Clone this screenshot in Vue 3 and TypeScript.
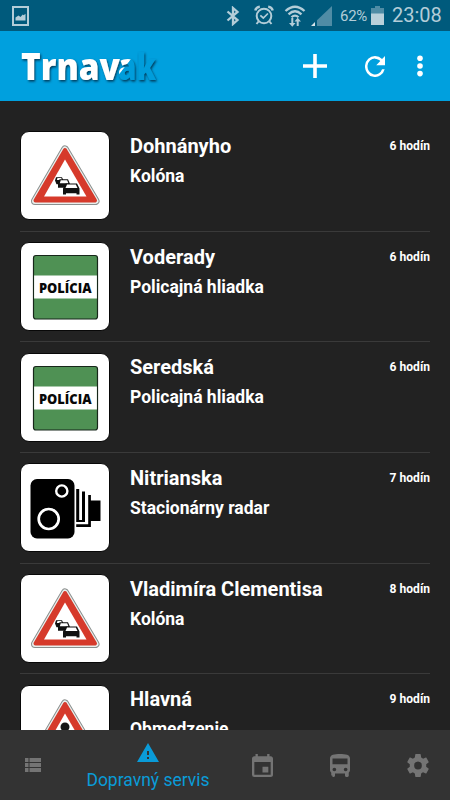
<script setup lang="ts">
type Sign = 'queue' | 'police' | 'radar' | 'works'

interface Report {
  place: string
  kind: string
  age: string
  sign: Sign
}

const reports: Report[] = [
  { place: 'Dohnányho', kind: 'Kolóna', age: '6 hodín', sign: 'queue' },
  { place: 'Voderady', kind: 'Policajná hliadka', age: '6 hodín', sign: 'police' },
  { place: 'Seredská', kind: 'Policajná hliadka', age: '6 hodín', sign: 'police' },
  { place: 'Nitrianska', kind: 'Stacionárny radar', age: '7 hodín', sign: 'radar' },
  { place: 'Vladimíra Clementisa', kind: 'Kolóna', age: '8 hodín', sign: 'queue' },
  { place: 'Hlavná', kind: 'Obmedzenie', age: '9 hodín', sign: 'works' },
]
</script>

<template>
  <div class="screen">
    <div class="status">
      <svg class="shot" width="17" height="20" viewBox="0 0 17 20">
        <path d="M1 1h15v18H1z" fill="none" stroke="#b3cdd8" stroke-width="2" />
        <path d="M3.5 14.5v-3l3-2 2 1.5 2.2-2.5 1 .8 1.8-1.600v6.800z" fill="#b3cdd8" />
      </svg>
      <div class="spacer"></div>
      <svg class="bt" width="14" height="20" viewBox="0 0 14 20">
        <path d="M1.500 5.500l10 8.600L7 18V2l4.500 3.900-10 8.600" fill="none" stroke="#b3cdd8" stroke-width="2.300" />
      </svg>
      <svg class="alarm" width="20" height="21" viewBox="0 0 20 21">
        <g fill="none" stroke="#b3cdd8">
          <circle cx="10" cy="11" r="7.300" stroke-width="2" />
          <path d="M1.300 5.600Q2 2 5.800 1.700M18.700 5.600Q18 2 14.200 1.700" stroke-width="2.400" />
          <path d="M6.300 10.300l3 2.700 4.600-4.500" stroke-width="1.700" />
          <path d="M4.500 16.500L2.500 19M15.500 16.500l2 2.500" stroke-width="2" />
        </g>
      </svg>
      <svg class="wifi" width="22" height="22" viewBox="0 0 22 22">
        <g fill="none" stroke="#b3cdd8" stroke-width="2.300">
          <path d="M1.500 6Q11-2.500 20.500 6" />
          <path d="M4.500 9.300Q11 3.200 17.500 9.300" />
          <path d="M7.500 12.300Q11 8.900 14.500 12.300" />
        </g>
        <path d="M7.300 13h2v5h2.200l-3.200 3.700L5 18h2.300zM12.700 21h2v-4.500H17l-3.300-3.700-3.200 3.700h2.200z" fill="#b3cdd8" />
      </svg>
      <svg class="signal" width="21" height="20" viewBox="0 0 21 20">
        <path d="M21 0v20H6v-5.700z" fill="#4f8ca5" />
        <path d="M4 16v4H0z" fill="#d6e5eb" />
      </svg>
      <span class="percent">62%</span>
      <svg class="battery" width="13" height="19" viewBox="0 0 13 19">
        <path d="M4 0h5v2h4v17H0V2h4z" fill="#4f8ca5" />
        <path d="M0 7.500h13V19H0z" fill="#b9d0da" />
      </svg>
      <span class="clock">23:08</span>
    </div>

    <header class="bar">
      <svg class="logo" width="150" height="60" viewBox="0 0 150 60">
        <defs>
          <linearGradient id="brand" gradientUnits="userSpaceOnUse" x1="113.200" y1="29.700" x2="113.900" y2="30.250">
            <stop offset="0" stop-color="#fff" />
            <stop offset="1" stop-color="#039ddb" />
          </linearGradient>
          <filter id="drop" filterUnits="userSpaceOnUse" x="0" y="0" width="150" height="60">
            <feDropShadow dx="1" dy="1.500" stdDeviation=".8" flood-color="#002f49" flood-opacity=".9" />
          </filter>
        </defs>
        <g fill="url(#brand)" filter="url(#drop)">
          <text x="9" y="43.500" textLength="99" lengthAdjust="spacingAndGlyphs">Trnav</text>
          <text x="106" y="43.500" textLength="38" lengthAdjust="spacingAndGlyphs">ak</text>
        </g>
      </svg>
      <div class="spacer"></div>
      <svg class="plus" width="24" height="24" viewBox="0 0 24 24">
        <path d="M12 0v24M0 12h24" stroke="#fff" stroke-width="3.600" />
      </svg>
      <svg class="reload" width="20" height="21" viewBox="4 4 16 16" preserveAspectRatio="none">
        <path d="M17.650 6.350A7.960 7.960 0 0 0 12 4a8 8 0 1 0 7.730 10h-2.080A6 6 0 1 1 12 6c1.660 0 3.140.69 4.220 1.780L13 11h7V4z" fill="#fff" />
      </svg>
      <svg class="more" width="6" height="22" viewBox="0 0 6 22">
        <g fill="#fff">
          <circle cx="3" cy="3.200" r="2.800" />
          <circle cx="3" cy="11" r="2.800" />
          <circle cx="3" cy="18.600" r="2.800" />
        </g>
      </svg>
    </header>

    <main class="list">
      <article v-for="r in reports" :key="r.place" class="row">
        <div class="tile">
          <svg v-if="r.sign === 'queue' || r.sign === 'works'" width="88" height="88" viewBox="-0.500 0 88 88">
            <path d="M43.500 17.500L74 69H13.500z" fill="#8b8f8e" stroke="#8b8f8e" stroke-width="8" stroke-linejoin="round" />
            <path d="M43.500 17.500L74 69H13.500z" fill="#e9efed" stroke="#e9efed" stroke-width="6" stroke-linejoin="round" />
            <path d="M43.500 18L73.500 68.500H14z" fill="#d63a2b" stroke="#d63a2b" stroke-width="4" stroke-linejoin="round" />
            <path d="M43.500 27.500L65 64.500H22.500z" fill="#fff" />
            <g v-if="r.sign === 'queue'">
              <path d="M33.500 48.500l1-3.300h6l1.500 3.300 1 1v2.800h-8z" fill="#111" />
              <path d="M35.300 48l.7-2h3.700l1 2z" fill="#fff" />
              <path d="M36.500 52l1.500-4.700h8.500l2 4.700v3.800h-12z" fill="#111" />
              <path d="M38.300 51.300l.9-3h6.500l1.200 3z" fill="#fff" />
              <path d="M41.500 56.500l2.800-5h11.200l2.500 5v6h-3v-1.300H44.500v1.300h-3z" fill="#111" />
              <path d="M44 56l1.500-3.500h8.800L56 56z" fill="#fff" />
            </g>
            <g v-else fill="#151515">
              <circle cx="43.500" cy="41" r="4.500" />
              <path d="M40 44h7l2 16H38z" />
            </g>
          </svg>
          <svg v-else-if="r.sign === 'police'" width="88" height="88" viewBox="0 0 88 88">
            <rect x="12.500" y="12.500" width="64" height="63.500" rx="2.500" fill="#4f9154" stroke="#17271a" stroke-width="1.200" />
            <path d="M13.100 32.500h62.800v23H13.100z" fill="#fff" />
            <text class="police" x="18" y="49.500" textLength="52.500" lengthAdjust="spacingAndGlyphs">POLÍCIA</text>
          </svg>
          <svg v-else width="88" height="88" viewBox="0 0 88 88">
            <rect x="9.500" y="15" width="44" height="59.500" rx="6.500" fill="#000" />
            <circle cx="40.800" cy="27" r="5.600" fill="none" stroke="#fff" stroke-width="2.400" />
            <circle cx="27.700" cy="55" r="10" fill="none" stroke="#fff" stroke-width="2.700" />
            <path d="M55.200 25h3v31h-3zM61 27.500h3V58h-3zM67.200 31h2.700v32H55.200v-2.700h12zM55.200 56h7.500v2h-7.500zM69.500 36.500h10v20.500h-10z" fill="#000" />
          </svg>
        </div>
        <div class="info">
          <h2>{{ r.place }}</h2>
          <p>{{ r.kind }}</p>
        </div>
        <span class="age">{{ r.age }}</span>
      </article>
    </main>

    <nav class="tabs">
      <div class="tab list-tab">
        <svg width="16" height="14" viewBox="0 0 16 14">
          <path d="M0 0h3.500v4H0zM4.500 0H16v4H4.500zM0 5h3.500v4H0zM4.500 5H16v4H4.500zM0 10h3.500v4H0zM4.500 10H16v4H4.500z" fill="#747474" />
        </svg>
      </div>
      <div class="tab active">
        <svg width="22" height="19" viewBox="1 2 22 19">
          <path d="M1 21h22L12 2zM13 18h-2v-2h2zm0-4h-2v-4h2z" fill="#0a9bd8" />
        </svg>
        <span>Dopravný servis</span>
      </div>
      <div class="tab event-tab">
        <svg width="21" height="23" viewBox="3 1 18 20" preserveAspectRatio="none">
          <path d="M17 12h-5v5h5zM16 1v2H8V1H6v2H5c-1.110 0-1.990.9-1.990 2L3 19a2 2 0 0 0 2 2h14c1.100 0 2-.9 2-2V5c0-1.100-.9-2-2-2h-1V1zm3 18H5V8h14z" fill="#747474" />
        </svg>
      </div>
      <div class="tab bus-tab">
        <svg width="20" height="23" viewBox="4 2 16 20" preserveAspectRatio="none">
          <path d="M4 16c0 .88.390 1.670 1 2.220V20c0 .55.450 1 1 1v1h1c.55 0 1-.45 1-1v-2h8v2c0 .55.450 1 1 1h1c.55 0 1-.45 1-1v-2.780c.61-.55 1-1.340 1-2.220V6c0-3.500-3.580-4-8-4s-8 .5-8 4zm3.500 1a1.500 1.500 0 1 1 0-3 1.500 1.500 0 0 1 0 3zm9 0a1.500 1.500 0 1 1 0-3 1.500 1.500 0 0 1 0 3zM18 11H6V6h12z" fill="#747474" />
        </svg>
      </div>
      <div class="tab gear-tab">
        <svg width="22" height="23" viewBox="2 2 20 20" preserveAspectRatio="none">
          <path d="M19.430 12.980c.04-.32.070-.64.070-.98s-.03-.66-.07-.98l2.110-1.650c.19-.15.240-.42.120-.64l-2-3.460c-.12-.22-.39-.3-.61-.22l-2.490 1c-.52-.4-1.080-.73-1.690-.98l-.38-2.650A.49.490 0 0 0 14 2h-4c-.25 0-.46.180-.49.420l-.38 2.650c-.61.250-1.170.590-1.690.98l-2.490-1c-.23-.09-.49 0-.61.220l-2 3.460c-.13.220-.07.490.12.640l2.110 1.650c-.04.320-.07.650-.07.980s.03.660.07.980l-2.110 1.650c-.19.150-.24.420-.12.640l2 3.460c.12.220.39.300.61.220l2.490-1c.52.400 1.080.730 1.690.98l.38 2.650c.03.240.24.420.49.420h4c.25 0 .46-.18.490-.42l.38-2.650c.61-.25 1.170-.59 1.690-.98l2.490 1c.23.090.49 0 .61-.22l2-3.460c.12-.22.070-.49-.12-.64zM12 15.500a3.500 3.500 0 1 1 0-7 3.500 3.500 0 0 1 0 7z" fill="#747474" />
        </svg>
      </div>
    </nav>
  </div>
</template>

<style>
body {
  margin: 0;
  background: #222;
}
</style>

<style scoped>
.screen {
  display: flex;
  flex-direction: column;
  width: 450px;
  height: 800px;
  overflow: hidden;
  background: #222;
  color: #fff;
  font-family: Roboto, sans-serif;
}
.spacer {
  flex: 1;
}
.status {
  display: flex;
  align-items: center;
  flex: none;
  box-sizing: border-box;
  height: 31px;
  padding: 0 8px 0 12px;
  background: #005a7c;
  color: #b3cdd8;
}
.bt { margin-right: 14px; }
.alarm { margin-right: 10px; }
.wifi { margin-right: 5px; }
.signal { margin-right: 8px; }
.percent {
  width: 31px;
  font-size: 15px;
  letter-spacing: -0.3px;
}
.battery { margin-right: 8px; }
.clock {
  width: 50px;
  font-size: 20px;
  line-height: 31px;
  white-space: nowrap;
}
.bar {
  display: flex;
  align-items: center;
  flex: none;
  box-sizing: border-box;
  height: 70px;
  padding: 0 27px 0 12px;
  background: #00a0de;
}
.logo text {
  font: 800 37.500px "Open Sans", "Noto Sans", sans-serif;
}
.plus { margin-right: 38px; }
.reload { margin-right: 32px; }
.list {
  flex: 1;
  min-height: 0;
  overflow: hidden;
  padding: 20px 20px 0;
}
.row {
  display: flex;
  box-sizing: border-box;
  height: 110.700px;
  padding-top: 10.400px;
  border-bottom: 1px solid #3a3a3a;
}
.tile {
  flex: none;
  box-sizing: border-box;
  width: 90px;
  height: 89px;
  overflow: hidden;
  border: 1px solid #080808;
  border-radius: 9px;
  background: #fff;
}
.tile svg {
  display: block;
}
.police {
  font: 800 14.500px "Open Sans", "Noto Sans", sans-serif;
  fill: #080808;
}
.info {
  flex: 1;
  padding-left: 20px;
}
h2 {
  margin: 2.500px 0 0;
  font-size: 20px;
  font-weight: 700;
  line-height: 24px;
}
p {
  margin: 7px 0 0;
  font-size: 17.500px;
  font-weight: 700;
  line-height: 22px;
}
.age {
  margin-top: 6.500px;
  font-size: 12.100px;
  font-weight: 700;
  line-height: 16px;
}
.tabs {
  display: grid;
  grid-template-columns: 66px 164px 65px 90px 65px;
  flex: none;
  height: 70px;
  background: #333;
}
.tab {
  display: flex;
  align-items: center;
  justify-content: center;
}
.active {
  flex-direction: column;
  justify-content: flex-start;
  padding-top: 13px;
  gap: 6px;
  color: #0a9bd8;
  font-size: 17.500px;
  line-height: 25px;
  white-space: nowrap;
}
</style>
